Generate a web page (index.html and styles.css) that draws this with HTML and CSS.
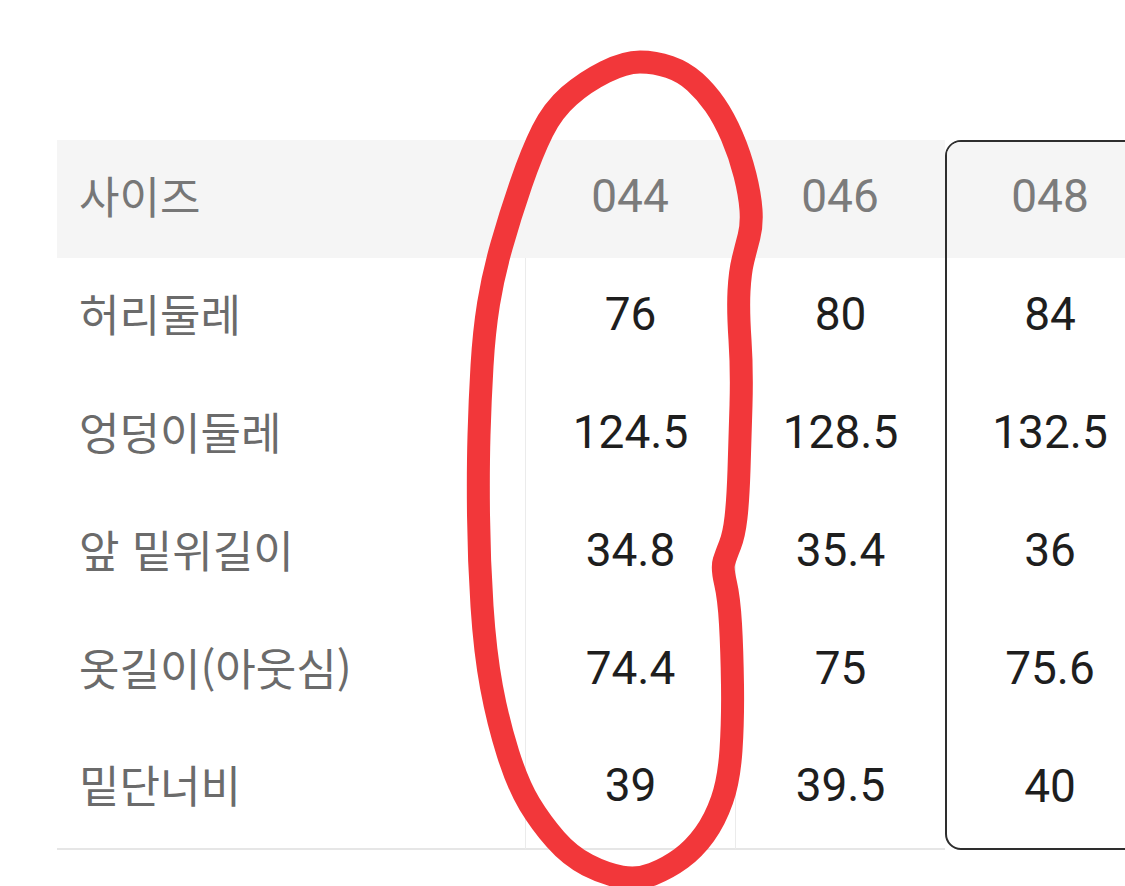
FILE: index.html
```html
<!DOCTYPE html>
<html lang="ko">
<head>
<meta charset="utf-8">
<title>사이즈표</title>
<link rel="stylesheet" href="styles.css">
</head>
<body>
<div class="page">
  <div class="chart">
    <div class="col col-label">
      <div class="cell head">사이즈</div>
      <div class="cell">허리둘레</div>
      <div class="cell">엉덩이둘레</div>
      <div class="cell">앞 밑위길이</div>
      <div class="cell">옷길이(아웃심)</div>
      <div class="cell last">밑단너비</div>
    </div>
    <div class="col col-num">
      <div class="cell head">044</div>
      <div class="cell">76</div>
      <div class="cell">124.5</div>
      <div class="cell">34.8</div>
      <div class="cell">74.4</div>
      <div class="cell last">39</div>
    </div>
    <div class="col col-num">
      <div class="cell head">046</div>
      <div class="cell">80</div>
      <div class="cell">128.5</div>
      <div class="cell">35.4</div>
      <div class="cell">75</div>
      <div class="cell last">39.5</div>
    </div>
    <div class="col col-num col-selected">
      <div class="cell head">048</div>
      <div class="cell">84</div>
      <div class="cell">132.5</div>
      <div class="cell">36</div>
      <div class="cell">75.6</div>
      <div class="cell last">40</div>
    </div>
  </div>
  <svg class="scribble" width="1125" height="886" viewBox="0 0 1125 886" aria-hidden="true">
    <path d="M640 62 Q655 62 669.5 67 Q684 72 695 82 Q706 92 715 105 Q724 118 732 136.5 Q740 155 745 175 Q750 195 751 210 Q752 225 749 236.5 Q746 248 743 260 Q740 272 739 291 Q738 310 740 340 Q742 370 741 405 Q740 440 739 470 Q738 500 736 517.5 Q734 535 730 545 Q726 555 724 561.5 Q722 568 725.5 583 Q729 598 730.5 624 Q732 650 732.5 685 Q733 720 731 750 Q729 780 722 800 Q715 820 704.5 834.5 Q694 849 681 858.5 Q668 868 653 874 Q638 880 621.5 877 Q605 874 587.5 865 Q570 856 555.5 839.5 Q541 823 529.5 804 Q518 785 508 753.5 Q498 722 491.5 687 Q485 652 482 606 Q479 560 478.5 515 Q478 470 479 435 Q480 400 482 366 Q484 332 488.5 304 Q493 276 501.5 246 Q510 216 521 184 Q532 152 542.5 131 Q553 110 569 96 Q585 82 605 72 Q625 62 640 62 Z" />
  </svg>
</div>
</body>
</html>
```
FILE: styles.css
```css
html, body {
  margin: 0;
  padding: 0;
  background: #ffffff;
}

body {
  width: 1125px;
  height: 886px;
  overflow: hidden;
}

.page {
  position: relative;
  width: 1125px;
  height: 886px;
  overflow: hidden;
  box-sizing: border-box;
  padding: 140px 0 0 57px;
}

.chart {
  display: flex;
  flex-direction: row;
  width: 1098px;
}

.col {
  display: flex;
  flex-direction: column;
  flex: none;
  box-sizing: border-box;
}

.col-label {
  width: 468px;
}

.col-num {
  width: 210px;
}

.cell {
  height: 118px;
  display: flex;
  align-items: center;
  box-sizing: border-box;
}

.head {
  background: #f5f5f5;
}

.cell.last {
  height: 120px;
  border-bottom: 2px solid #e6e6e6;
}

.col-label .cell {
  padding-left: 22px;
  padding-bottom: 9px;
  font-family: "Noto Sans CJK KR", "Noto Sans", sans-serif;
  font-size: 44px;
  color: #6b6b6b;
}

.col-label .cell.last {
  padding-bottom: 11px;
}

.col-label .head {
  color: #777777;
}

.col-num .cell {
  justify-content: center;
  padding-bottom: 6px;
  font-family: Roboto, "Noto Sans", sans-serif;
  font-size: 46px;
  color: #1e1e1e;
  border-left: 1px solid #ebebeb;
}

.col-num .cell.last {
  padding-bottom: 8px;
}

.col-num .head {
  color: #7b7b7b;
  border-left: none;
}

.col-selected {
  border: 2px solid #2e2e2e;
  border-radius: 16px 0 0 16px;
  overflow: hidden;
}

.col-selected .cell {
  border-left: none;
}

.col-selected .head {
  height: 116px;
  padding-bottom: 8px;
}

.col-selected .cell.last {
  height: 118px;
  border-bottom: none;
  padding-bottom: 6px;
}

.scribble {
  position: absolute;
  left: 0;
  top: 0;
  pointer-events: none;
}

.scribble path {
  fill: none;
  stroke: #f2373a;
  stroke-width: 23;
  stroke-linejoin: round;
  stroke-linecap: round;
}
```
